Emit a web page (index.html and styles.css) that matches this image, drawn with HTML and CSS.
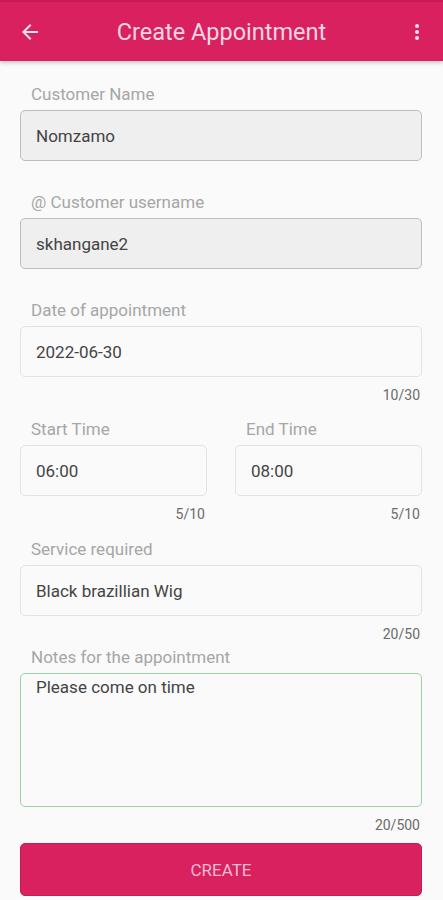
FILE: index.html
```html
<!DOCTYPE html>
<html lang="en">

<head>
    <meta charset="UTF-8">
    <meta name="viewport" content="width=device-width, initial-scale=1.0">
    <title>Create Appointment</title>
    <link rel="stylesheet" href="styles.css">
</head>

<body>
    <!-- top bar -->
    <div class="toolbar">
        <svg class="back" width="24" height="24" viewBox="0 0 24 24">
            <path d="M20 11H7.83l5.59-5.59L12 4l-8 8 8 8 1.41-1.41L7.83 13H20v-2z" fill="#fbe3ec" />
        </svg>
        <div class="title">Create Appointment</div>
        <svg class="more" width="24" height="24" viewBox="0 0 24 24">
            <path d="M12 8c1.1 0 2-.9 2-2s-.9-2-2-2-2 .9-2 2 .9 2 2 2zm0 2c-1.1 0-2 .9-2 2s.9 2 2 2 2-.9 2-2-.9-2-2-2zm0 6c-1.1 0-2 .9-2 2s.9 2 2 2 2-.9 2-2-.9-2-2-2z" fill="#fbe3ec" />
        </svg>
    </div>

    <div class="form">
        <div class="field">
            <div class="label">Customer Name</div>
            <div class="input locked">Nomzamo</div>
        </div>

        <div class="field">
            <div class="label">@ Customer username</div>
            <div class="input locked">skhangane2</div>
        </div>

        <div class="field counted">
            <div class="label">Date of appointment</div>
            <div class="input">2022-06-30</div>
            <div class="counter">10/30</div>
        </div>

        <!-- start / end time side by side -->
        <div class="row">
            <div class="field counted">
                <div class="label">Start Time</div>
                <div class="input">06:00</div>
                <div class="counter">5/10</div>
            </div>
            <div class="field counted">
                <div class="label">End Time</div>
                <div class="input">08:00</div>
                <div class="counter">5/10</div>
            </div>
        </div>

        <div class="field counted tight">
            <div class="label">Service required</div>
            <div class="input">Black brazillian Wig</div>
            <div class="counter">20/50</div>
        </div>

        <div class="field counted last">
            <div class="label">Notes for the appointment</div>
            <div class="input notes">Please come on time</div>
            <div class="counter">20/500</div>
        </div>

        <div class="button">CREATE</div>
    </div>
</body>

</html>
```

FILE: styles.css
```css
body {
    margin: 0;
    background-color: #fafafa;
    font-family: Roboto, "Liberation Sans", sans-serif;
}

/* header */
.toolbar {
    height: 59px;
    border-top: 2px solid #c91a56;
    background-color: #d9215f;
    display: flex;
    align-items: center;
    padding: 0 14px 0 18px;
    box-shadow: 0 2px 4px rgba(0, 0, 0, 0.2);
}

.title {
    flex: 1;
    text-align: center;
    color: #f8d6e2;
    font-size: 23.5px;
    margin-top: 1px;
    margin-right: 4px;
}

.back {
    margin-top: 1px;
}

.more {
    margin-top: 1px;
}

.form {
    padding: 23px 21px 0 20px;
}

.field {
    margin-bottom: 31px;
}

.field.counted {
    margin-bottom: 16px;
}

.field.tight {
    margin-bottom: 5px;
}

.field.last {
    margin-bottom: 10px;
}

.label {
    font-size: 17px;
    line-height: 20px;
    color: #a6a6a6;
    padding-left: 11px;
    margin-bottom: 6px;
}

.input {
    height: 49px;
    border: 1px solid #e3e3e3;
    border-radius: 5px;
    background-color: #fafafa;
    padding: 0 15px;
    display: flex;
    align-items: center;
    font-size: 17px;
    color: #444444;
}

.input.locked {
    background-color: #efefef;
    border-color: #bdbdbd;
}

.input.notes {
    align-items: flex-start;
    padding-top: 3px;
    box-sizing: border-box;
    height: 134px;
    border-color: #9fd1a8;
    line-height: 20px;
}

.counter {
    text-align: right;
    font-size: 14px;
    line-height: 16px;
    color: #6b6b6b;
    margin-top: 10px;
    padding-right: 2px;
}

.row {
    display: grid;
    grid-template-columns: 1fr 1fr;
    column-gap: 28px;
}

.row .field {
    margin-bottom: 17px;
}

.button {
    height: 51px;
    border: 1px solid #c81a55;
    border-radius: 5px;
    background-color: #d9215f;
    color: #f4bcd0;
    font-size: 17px;
    display: flex;
    align-items: center;
    justify-content: center;
}
```
